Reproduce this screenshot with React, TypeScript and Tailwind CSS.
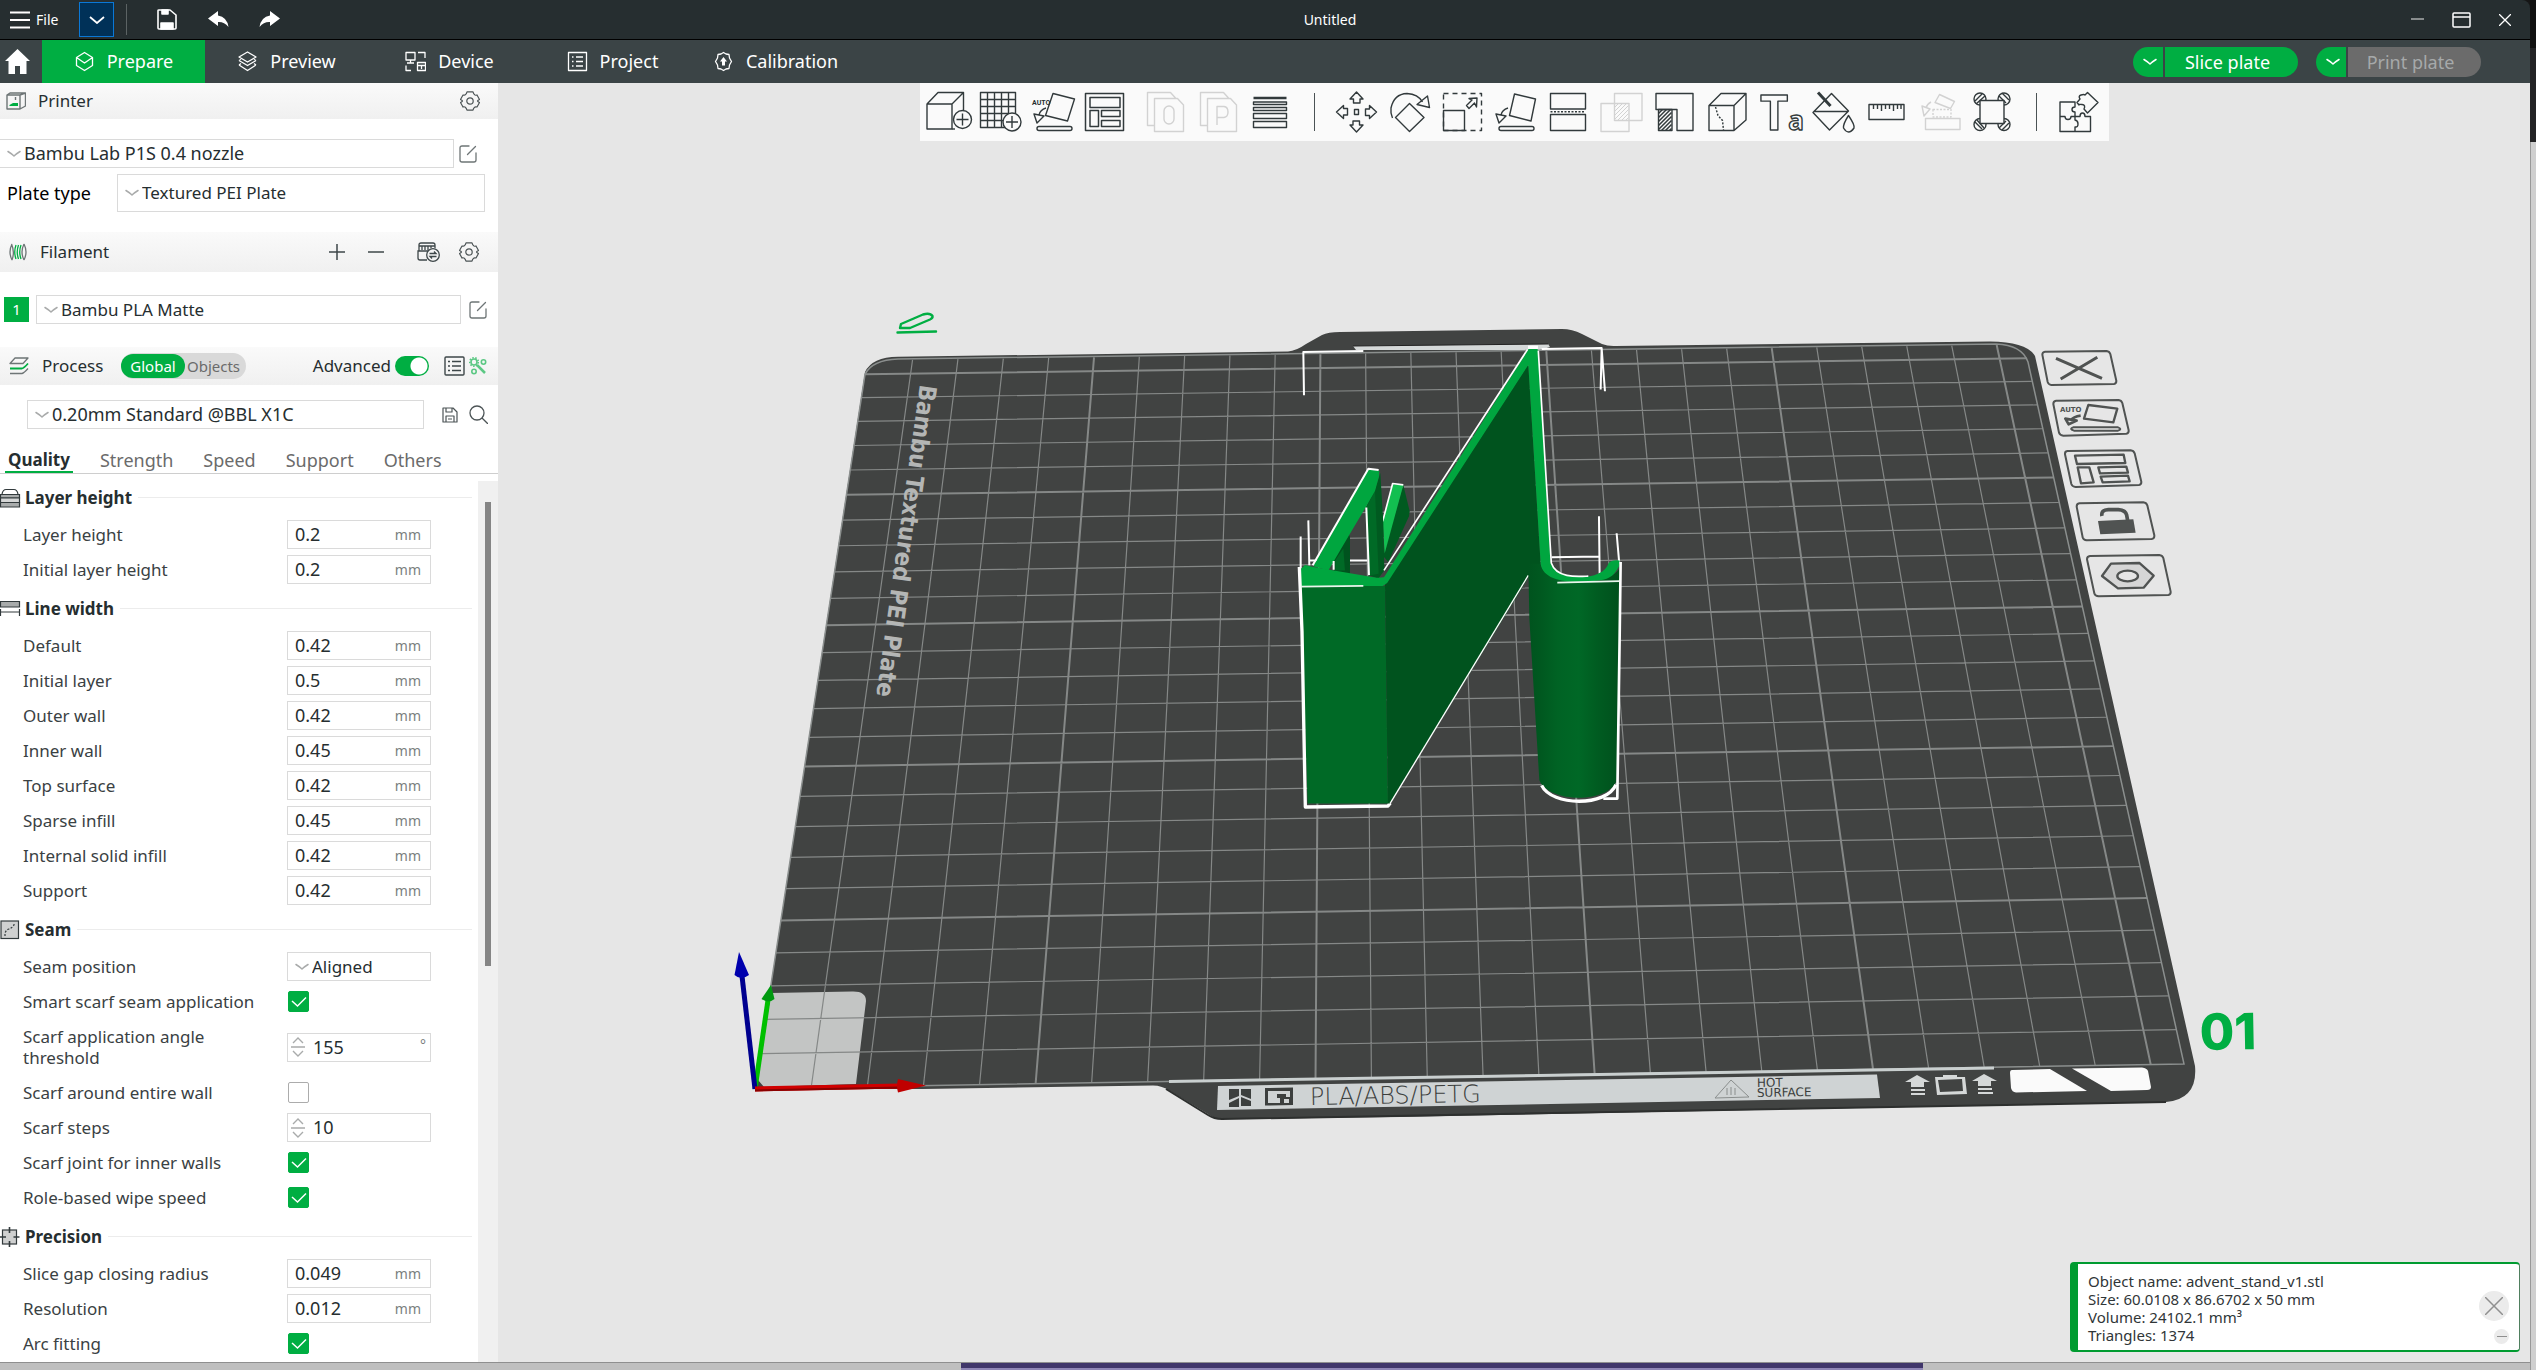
import React, { useState } from "react";

/* ---------- geometry of the build plate ---------- */

const P0 = [755, 1088.5];
const P1 = [2184, 1064];
const P2 = [2026.7, 358.3];
const P3 = [865, 374.3];

function project(mx: number, my: number): [number, number] {
  const u = mx / 256;
  const v = my / 250;
  const dx1 = P1[0] - P2[0];
  const dx2 = P3[0] - P2[0];
  const dx3 = P0[0] - P1[0] + P2[0] - P3[0];
  const dy1 = P1[1] - P2[1];
  const dy2 = P3[1] - P2[1];
  const dy3 = P0[1] - P1[1] + P2[1] - P3[1];
  const det = dx1 * dy2 - dx2 * dy1;
  const g = (dx3 * dy2 - dx2 * dy3) / det;
  const h = (dx1 * dy3 - dx3 * dy1) / det;
  const a = P1[0] - P0[0] + g * P1[0];
  const b = P3[0] - P0[0] + h * P3[0];
  const d = P1[1] - P0[1] + g * P1[1];
  const e = P3[1] - P0[1] + h * P3[1];
  const w = g * u + h * v + 1;
  return [(a * u + b * v + P0[0]) / w, (d * u + e * v + P0[1]) / w];
}

function gridPath(bold: boolean) {
  const parts: string[] = [];
  for (let i = 10; i <= 250; i += 10) {
    if ((i % 50 === 0) !== bold) continue;
    const a = project(i, 0);
    const b = project(i, 256);
    const c = project(0, i);
    const d = project(256, i);
    parts.push(`M${a[0]} ${a[1]}L${b[0]} ${b[1]}M${c[0]} ${c[1]}L${d[0]} ${d[1]}`);
  }
  return parts.join("");
}

/* ---------- 3D scene ---------- */

function Model() {
  return (
    <g transform="translate(1260 300) scale(0.3333 0.338)" strokeLinejoin="round">
      <g fill="none" stroke="#fff" strokeWidth="6">
        <path d="M132 282L130 154L310 151" />
        <path d="M845 145L1025 142L1022 265M1025 142L1035 270" />
        <path d="M122 700V795M145 652L148 785M148 771H322" />
        <path d="M1017 640L1019 810M875 761L1017 759M1070 690L1078 780" />
      </g>
      {/* prong */}
      <path d="M430 547L449 625L447 640L385 775L372 760L372 740Z" fill="#005a20" />
      <path d="M398 545L430 547L374 750L368 655Z" fill="#12bf50" />
      <path d="M368 655L398 543L430 547" fill="none" stroke="#fff" strokeWidth="5" />
      {/* clip frame */}
      <path d="M222 805V765L265 692L270 700V812Z" fill="#00531e" />
      <path d="M226 800V770L250 735L255 800Z" fill="#006a26" />
      <path d="M318 612L345 560L361 512L370 660L373 800L355 824L328 815Z" fill="#005a20" />
      <path d="M320 612L345 565L356 810L328 815Z" fill="#006a26" />
      <path d="M160 788L325 500L358 506L357 522L345 565L318 612L265 700L205 800Z" fill="#00a63f" />
      <path d="M158 785L325 499L356 503M319 614L327 814M221 772V798" fill="none" stroke="#fff" strokeWidth="6" />
      {/* cap of the left block */}
      <path d="M120 798L135 784L160 790L350 822L372 822L400 790L382 838L368 846H120Z" fill="#00a63f" />
      <path d="M122 846H375L384 1490H143Z" fill="#006a26" />
      <path d="M118 790L126 980L136 1500L384 1497L391 1488" fill="none" stroke="#fff" strokeWidth="10" />
      {/* long slanted wall */}
      <path d="M375 843L805 190L842 780L808 816L390 1490L384 1490Z" fill="#00531e" />
      <path d="M805 815L390 1490" stroke="#fff" strokeWidth="4" />
      {/* curled hook */}
      <path
        d="M805 780H842C850 845 1060 850 1080 790L1078 1000L1070 1420C1050 1490 865 1490 838 1420L808 940Z"
        fill="url(#hook)"
      />
      <path
        d="M372 820L805 146L818 139L832 142L835 155L872 778C890 832 1030 835 1046 778Q1056 768 1079 771V785C1070 800 1060 822 1030 828C950 840 850 838 842 780L805 192L381 838Q370 842 345 824Z"
        fill="#00a63f"
      />
      <path d="M372 800L803 146M835 150L874 778C890 826 960 818 985 817" fill="none" stroke="#fff" strokeWidth="5" />
      <path d="M804 140H834" stroke="#fff" strokeWidth="10" />
      <path d="M122 848L310 846M892 836L1078 832" stroke="#e9f5ec" strokeWidth="5" />
      <path d="M1082 775L1079 1000L1072 1475H1030" fill="none" stroke="#fff" strokeWidth="8" />
      <path d="M845 1436C875 1498 1040 1500 1068 1434" fill="none" stroke="#fff" strokeWidth="10" />
    </g>
  );
}

function PlateIcons() {
  return (
    <g transform="translate(1980 320) scale(0.3333)" fill="none" stroke="#505352" strokeWidth="6" strokeLinejoin="round">
      <path d="M195 95L380 93Q388 94 391 102L409 182Q410 191 402 192L214 195Q206 194 203 186L187 104Q187 96 195 95Z" />
      <path d="M228 115L366 175M352 112L242 177" strokeWidth="9" />
      <path d="M228 242L416 240Q424 241 427 249L446 331Q447 340 439 341L250 347Q240 346 237 338L220 252Q220 243 228 242Z" />
      <path d="M325 255L412 266L400 307L312 296Z" strokeWidth="7" />
      <path d="M280 322H414Q428 327 414 332H282Q266 327 280 322Z" />
      <path d="M302 287Q280 290 272 302M256 296L290 302L266 313Z" strokeWidth="8" />
      <text
        x="240"
        y="277"
        fontFamily="'DejaVu Sans', sans-serif"
        fontSize="21"
        fontWeight="700"
        fill="#505352"
        stroke="none"
      >
        AUTO
      </text>
      <path d="M262 393L452 391Q461 392 464 400L484 485Q485 494 477 495L287 501Q277 500 274 492L255 403Q254 394 262 393Z" />
      <path
        d="M285 407L431 404L436 429L291 432ZM293 442H328L341 487L303 490ZM355 442L439 440L444 458L360 460ZM362 470L444 467L449 484L368 487Z"
        strokeWidth="7"
      />
      <path d="M298 550L490 547Q499 548 502 556L523 646Q524 656 515 657L320 661Q311 660 308 652L290 560Q290 551 298 550Z" />
      <path d="M354 603L460 598L467 638L361 643Z" fill="#505352" stroke="none" />
      <path d="M366 588Q362 570 385 569H415Q436 570 440 585L443 602" strokeWidth="11" />
      <path d="M330 708L538 705Q547 706 550 714L572 815Q573 824 565 825L356 829Q346 828 343 820L321 718Q321 709 330 708Z" />
      <path d="M393 731L478 729L521 767L491 803L414 805L366 768Z" fill="#d6d6d6" strokeWidth="7" />
      <ellipse cx="443" cy="768" rx="31" ry="16" fill="#e6e6e6" strokeWidth="7" />
    </g>
  );
}

function Scene() {
  const [a, b] = [project(0, 250), project(256, 0)];
  return (
    <svg
      viewBox="498 83 2032 1279"
      className="absolute inset-0 block h-full w-full"
      role="img"
      aria-label="Build plate with model"
    >
      <defs>
        <linearGradient id="hook" gradientUnits="userSpaceOnUse" x1="805" x2="1080" y1="0" y2="0">
          <stop offset="0" stopColor="#00531e" />
          <stop offset="0.15" stopColor="#005920" />
          <stop offset="0.32" stopColor="#006324" />
          <stop offset="0.55" stopColor="#006826" />
          <stop offset="0.75" stopColor="#005c21" />
          <stop offset="1" stopColor="#00501c" />
        </linearGradient>
        <clipPath id="plate">
          <path d="M755 1089L865 372Q872 358 898 358L1980 343Q2022 343 2028 360L2185 1066Z" />
        </clipPath>
      </defs>
      <path
        d="M755 1089L865 372Q872 357 898 356.700L1288 351.500Q1296 351 1306 344L1322 335Q1328 332 1340 332L1562 329Q1572 329 1582 334L1602 344Q1608 346.500 1616 346L1990 341.500Q2027 342 2035 356L2094 618L2195 1066Q2198 1099 2166 1102L1400 1117L1222 1119Q1214 1119 1208 1114L1170 1091Q1162 1085.500 1153 1085.500L923 1089Z"
        fill="#414342"
      />
      <path d="M1166 1089L1208 1115Q1214 1119 1222 1119L2166 1102" fill="none" stroke="#2d2f2e" strokeWidth="2" />
      <path d="M1353 346L1548 344L1550 347L1540 350L1356 350Z" fill="#d5d9d9" />
      <path d="M1353 346L1548 344" stroke="#222" strokeWidth="1" />
      <path
        d="M771 993L852 991.500Q866 991 866 1001L856 1084L764 1087L758 1080Z"
        fill="#c3c5c4"
      />
      <g clipPath="url(#plate)" fill="none" stroke="#858887">
        <path d={gridPath(false)} strokeWidth="1.200" />
        <path d={gridPath(true)} strokeWidth="2" />
      </g>
      <path
        d={`M755 1088.500L${a[0]} ${a[1]}Q872 360 898 359L1996 344Q2022 345 2028 362L${b[0]} ${b[1]}Z`}
        fill="none"
        stroke="#8b8f8e"
        strokeWidth="1.500"
      />
      <path d="M1169 1081.500L1994 1068" stroke="#c9cfcf" strokeWidth="3" />
      <path d="M1218 1086L1877 1074.500L1880 1098L1217 1110Z" fill="#cfd3d4" />

      {/* plate markings */}
      <g fill="#3c3f3e">
        <path d="M1229 1089H1239V1096L1229 1100ZM1241 1089H1251V1099L1241 1095ZM1229 1103L1239 1098V1107H1229ZM1241 1097L1251 1101V1106H1241Z" />
        <path d="M1265 1088L1293 1087.500V1105L1265 1105.500ZM1268 1091V1103H1280V1098H1277V1094H1286V1097H1290V1091Z" fillRule="evenodd" />
        <rect x="1284" y="1099" width="5" height="4" fill="#cfd3d4" />
        <text x="1310" y="1105" fontFamily="DejaVu Sans" fontSize="24" fontWeight="200" transform="rotate(-1 1310 1105)">
          PLA/ABS/PETG
        </text>
        <g fontFamily="DejaVu Sans" fontSize="12">
          <text x="1757" y="1087" transform="rotate(-1 1757 1087)">HOT</text>
          <text x="1757" y="1097" transform="rotate(-1 1757 1097)">SURFACE</text>
        </g>
      </g>
      <path d="M1731 1080L1715 1098L1749 1097ZM1727 1095V1088M1731 1095V1087M1735 1095V1088" fill="none" stroke="#8a8e8d" />
      <g fill="#d5d8d8">
        <path d="M1917 1075L1930 1082H1924V1087H1911V1082H1905ZM1911 1089H1925V1091H1911ZM1911 1093H1925V1095H1911Z" />
        <path d="M1984 1074L1997 1081H1991V1086H1978V1081H1972ZM1978 1088H1992V1090H1978ZM1978 1092H1993V1094H1978Z" />
        <path d="M1935 1077H1943V1075H1957V1077H1965L1967 1094L1937 1095ZM1938 1080L1940 1092L1963 1091L1962 1079Z" fillRule="evenodd" />
      </g>
      <path d="M2012 1070L2050 1069L2087 1091L2016 1092.500Q2012 1092 2011 1088L2010 1073Q2010 1070 2012 1070Z" fill="#fafafa" />
      <path d="M2072 1068.500L2142 1067.500Q2147 1068 2148 1071L2151 1087Q2151 1090 2147 1090L2111 1091Z" fill="#fafafa" />
      <text
        x="920"
        y="384"
        fontFamily="'Liberation Sans Narrow', 'DejaVu Sans Condensed', sans-serif"
        fontSize="24"
        fontWeight="700"
        fill="#b4b6b5"
        transform="rotate(98 920 384)"
      >
        Bambu Textured PEI Plate
      </text>
      <text x="2200" y="1050" fontFamily="Inter, sans-serif" fontSize="50" fontWeight="800" fill="#00ae42" transform="rotate(-1 2200 1050)">
        01
      </text>
      <g fill="none" stroke="#00ae42" strokeWidth="2.400" strokeLinejoin="round" strokeLinecap="round">
        <path d="M900 328L901 324L923 314.500Q930 312.500 932.500 316Q933 318 930 319.500L910 328Z" />
        <path d="M897.500 332.500L936 331.500" />
      </g>

      <Model />
      <PlateIcons />

      {/* axes */}
      <path d="M755 1089L768 1000" stroke="#00c000" strokeWidth="5" />
      <path d="M771 985L774.500 999Q768 1004 761.500 999Z" fill="#009a10" />
      <path d="M755 1089L742 976" stroke="#00008f" strokeWidth="5" />
      <path d="M739 952L749 975Q741 981 734.500 975Z" fill="#0000ae" />
      <path d="M755 1089L900 1086" stroke="#d00000" strokeWidth="5" />
      <path d="M755 1090.500L900 1087.500" stroke="#8a0000" strokeWidth="2" />
      <path d="M926 1085.500L898 1079Q896 1086 898 1092.500Z" fill="#c00000" />
    </svg>
  );
}

/* ---------- toolbar ---------- */

function ToolArrow() {
  return <path d="M14 18Q8 20 7 25M2 24L12 26L5 33Z" />;
}

const hatch = (x: number, y: number, w: number, h: number) => {
  const out: string[] = [];
  for (let i = 4; i < w + h; i += 4) {
    const x1 = Math.min(i, w);
    const y1 = i - x1;
    const y2 = Math.min(i, h);
    const x2 = i - y2;
    out.push(`M${x + x1} ${y + y1}L${x + x2} ${y + y2}`);
  }
  return out.join("");
};

const move = "M21.500 2L28 9H25V13H18.500V9H15Z";

type Tool = { label: string; dim?: boolean; art: React.ReactNode };

const addTools: Tool[] = [
  {
    label: "Add",
    art: (
      <>
        <path d="M1 14H26V39H1ZM1 14L12 2.500H37.500V20M26 14L37.500 2.500" />
        <path d="M26 39H29" />
        <circle cx="36.500" cy="29.500" r="9" />
        <path d="M30.500 29.500H42.500M36.500 23.500V35.500" />
      </>
    ),
  },
  {
    label: "Add plate",
    art: (
      <>
        <path d="M26 37.500H1.500V2.500H36.500V23M1.500 9.500H36.500M1.500 16.500H36.500M1.500 23.500H30M1.500 30.500H24M8.500 2.500V37.500M15.500 2.500V37.500M22.500 2.500V37.500M29.500 2.500V24" />
        <circle cx="33" cy="32" r="9" />
        <path d="M27 32H39M33 26V38" />
      </>
    ),
  },
  {
    label: "Auto orient",
    art: (
      <>
        <path d="M21 3.500L42.500 9L35.500 31L13.500 25.500Z" />
        <ToolArrow />
        <rect x="5" y="36.500" width="35" height="4" rx="2" />
        <text x="0" y="15" fontSize="7" fontWeight="700" fontFamily="Roboto, sans-serif" fill="#262e30" stroke="none">
          AUTO
        </text>
      </>
    ),
  },
  {
    label: "Arrange",
    art: (
      <path
        d="M.5 3.500H38.500V40.500H.5ZM5 7.500H35V17.500H5ZM5 20.500H13.500V36.500H5ZM16.500 20.500H35V26.500H16.500ZM16.500 30.500H35V36.500H16.500Z"
        strokeWidth="1.500"
      />
    ),
  },
];

const docShape = (
  <path d="M11.500 35.500H4.500V2.500H27.500L32.500 8M11.500 8.500H34.500L40.500 15V41.500H11.500Z" />
);

const splitTools: Tool[] = [
  {
    label: "Split to objects",
    dim: true,
    art: (
      <>
        {docShape}
        <rect x="21" y="16" width="10" height="18" rx="5" />
      </>
    ),
  },
  {
    label: "Split to parts",
    dim: true,
    art: (
      <>
        {docShape}
        <path d="M21 35V16.500H28Q32 17 32 22T28 27.500H21" />
      </>
    ),
  },
  {
    label: "Variable layer height",
    art: (
      <>
        <path d="M4.500 8H37.500" strokeWidth="2.500" />
        <path d="M4.500 12H37.500V14.500H4.500ZM4.500 17.500H37.500V20.500H4.500ZM4.500 23.500H37.500V28.500H4.500ZM4.500 31.500H37.500V37.500H4.500Z" />
      </>
    ),
  },
];

const gizmoTools: Tool[] = [
  {
    label: "Move",
    art: (
      <>
        <path d={move} />
        <path d={move} transform="rotate(90 21.500 22)" />
        <path d={move} transform="rotate(180 21.500 22)" />
        <path d={move} transform="rotate(270 21.500 22)" />
        <rect x="19.500" y="19.500" width="4" height="5" />
      </>
    ),
  },
  {
    label: "Rotate",
    art: (
      <>
        <path d="M21.500 13.500L36 27.500L21.500 41.500L7.500 27.500Z" />
        <path d="M4.500 28A18 18 0 0 1 3 18Q6 4 19 3.500Q30 4 34.500 12M29 14.500L39.500 6L41.500 17.500Z" />
      </>
    ),
  },
  {
    label: "Scale",
    art: (
      <>
        <path d="M2.500 3.500H40.500V40.500H2.500Z" strokeDasharray="5 4" />
        <path d="M2.500 20.500H23.500V40.500H2.500Z" />
        <path d="M25.500 15.500L31 10L28 8.500L36 8L35.500 17L33.500 13L28 18.500Z" />
      </>
    ),
  },
  {
    label: "Lay on face",
    art: (
      <>
        <path d="M20.500 4L41.500 9L37 31L15.500 25.500Z" />
        <ToolArrow />
        <rect x="5" y="36.500" width="35" height="4" rx="2" />
      </>
    ),
  },
  {
    label: "Cut",
    art: (
      <>
        <path d="M3.500 3.500H38.500V19H3.500ZM3.500 24.500H38.500V40.500H3.500Z" />
        <path d="M3.500 21.700H38.500" strokeDasharray="2 1.500" />
      </>
    ),
  },
  {
    label: "Mesh boolean",
    dim: true,
    art: (
      <>
        <path d="M14.500 3.500H42V30.500H14.500ZM1 13.500H29V41.500H1Z" />
        <path d={hatch(14.5, 13.5, 14, 17)} strokeWidth="1" />
      </>
    ),
  },
  {
    label: "Support painting",
    art: (
      <>
        <path d="M3 3.500H40V40.500H24V19.500H3Z" />
        <path d="M5.500 19.500H19V40.500H5.500Z" />
        <path d={hatch(5.5, 19.5, 13, 21)} strokeWidth="1.500" />
      </>
    ),
  },
  {
    label: "Seam painting",
    art: (
      <>
        <path d="M3 15.500H28V40.500H3ZM3 15.500L15 3.500H40V30L28 40.500M28 15.500L40 3.500" />
        <path d="M9.500 17L12 25.500L16.500 30.500L17.500 40" strokeDasharray="2 1.500" />
      </>
    ),
  },
  {
    label: "Text shape",
    art: (
      <text x="1" y="40" fontSize="49" fontFamily="'Noto Sans', sans-serif" fontWeight="700">
        T<tspan fontSize="26">a</tspan>
      </text>
    ),
  },
  {
    label: "Color painting",
    art: (
      <>
        <path d="M19.500 3.500L36.500 21L17.500 40L1 22.500ZM1.500 21.500H36" />
        <path d="M6 2.500L18.500 16" strokeWidth="3" />
        <path d="M36.500 25.500Q43 35 42 38Q36.500 46 31.500 38Q31 34 36.500 25.500Z" />
      </>
    ),
  },
  {
    label: "Measure",
    art: <path d="M4 14.500H39V29.500H4ZM8.500 14.500V19M12.500 14.500V19M16.500 14.500V21M20.500 14.500V19M24.500 14.500V19M28.500 14.500V21M32.500 14.500V19M36 14.500V19" />,
  },
  {
    label: "Assemble",
    dim: true,
    art: (
      <>
        <path d="M7.500 28.500H42V39.500H7.500ZM21.500 4.500L36.500 11.500L32.500 18.500L17 12.500Z" />
        <path d="M15 19.500H33V27H15Z" strokeDasharray="2 1.500" />
        <path d="M13 12Q9 14 8 18M4 16L12 19L6 26Z" />
      </>
    ),
  },
  {
    label: "Brim ears",
    art: (
      <>
        <circle cx="9" cy="9" r="6" />
        <circle cx="33" cy="9" r="6" />
        <circle cx="9" cy="34.500" r="6" />
        <circle cx="33" cy="34.500" r="6" />
        <path d="M4 11L11 4M5 14L14 6M28 6L35 13M31 3L38 10M4 32L11 39M6 30L13 38M28 38L35 31M31 40L38 33" />
        <path d="M9 10.500H33V33.500H9Z" fill="#fafafa" />
      </>
    ),
  },
];

const assemblyTool: Tool = {
  label: "Assembly view",
  art: (
    <>
      <path d="M18 12H3V41.500H33.500V26.500H28Q28 23 25.500 23T23 26.500H18V22Q15 22 15 19.500T18 17Z" />
      <path d="M3 26.500H8Q8 29.500 11 29.500T14 26.500H18V30Q21 30.500 21 34T18 37V41.500" />
      <path d="M30.500 2.500L41 12.500L30.500 23L27 19Q29 15 25 14.500T22 15L20 12.500L23 9Q21 6 24 5T28 5Z" />
    </>
  ),
};

function ToolButton({ tool }: { tool: Tool }) {
  return (
    <button type="button" aria-label={tool.label} className="h-11 w-[45px] shrink-0">
      <svg
        viewBox="0 0 45 44"
        className={tool.dim ? "h-11 w-[45px] overflow-visible stroke-[#d2d2d2]" : "h-11 w-[45px] overflow-visible stroke-[#323a3c]"}
        fill="none"
        strokeWidth="1.400"
        strokeLinejoin="round"
      >
        {tool.art}
      </svg>
    </button>
  );
}

function Toolbar() {
  return (
    <div className="relative z-10 mx-auto flex h-[58px] w-fit items-center gap-2 bg-[#fafafa] pl-1.5 pr-[7px]">
      {addTools.map((t) => (
        <ToolButton key={t.label} tool={t} />
      ))}
      <div className="flex gap-2 pl-[5px]">
        {splitTools.map((t) => (
          <ToolButton key={t.label} tool={t} />
        ))}
      </div>
      <span className="mx-3 h-[38px] w-px bg-[#4a5254]" />
      {gizmoTools.map((t) => (
        <ToolButton key={t.label} tool={t} />
      ))}
      <span className="mx-3 h-[38px] w-px bg-[#4a5254]" />
      <ToolButton tool={assemblyTool} />
    </div>
  );
}

/* ---------- top bars ---------- */

function Chevron({ className }: { className: string }) {
  return (
    <svg viewBox="0 0 14 8" className={className} fill="none" strokeWidth="1.500" strokeLinecap="round" strokeLinejoin="round">
      <path d="M1 1.500Q5 4 7 6Q9 4 13 1.500" />
    </svg>
  );
}

function TitleBar() {
  return (
    <header className="grid h-10 grid-cols-3 items-center rounded-tr-lg border-b border-black bg-[#262e30] text-white">
      <div className="flex items-center">
        <button type="button" className="flex items-center gap-1.5 pl-2.5 text-[14px]">
          <svg viewBox="0 0 20 18" className="h-[18px] w-5" stroke="#fff" strokeWidth="2">
            <path d="M0 1.500H20M0 9H20M0 16.500H20" />
          </svg>
          File
        </button>
        <button
          type="button"
          aria-label="Menu"
          className="ml-[21px] flex h-[35px] w-[35px] items-center justify-center border border-[#0a78d7] bg-[#003158]"
        >
          <svg viewBox="0 0 16 8" className="h-2 w-4" fill="none" stroke="#fff" strokeWidth="1.800">
            <path d="M1 1L8 7L15 1" />
          </svg>
        </button>
        <span className="ml-3 h-[31px] w-px bg-[#5c6364]" />
        <button type="button" aria-label="Save" className="ml-[30px]">
          <svg viewBox="0 0 20 21" className="h-[21px] w-5" fill="none" stroke="#fff" strokeWidth="1.600" strokeLinejoin="round">
            <path d="M1 1.500Q1 1 2 1H13L19 6V19Q19 20 18 20H2Q1 20 1 19Z" />
            <path d="M5 1H11V5H5ZM4 14H16V20H4Z" fill="#fff" />
          </svg>
        </button>
        <button type="button" aria-label="Undo" className="ml-[31px]">
          <svg viewBox="0 0 21 17" className="h-[17px] w-[21px]" fill="#fff">
            <path d="M0 7.500L10 0V4.500Q19 6 20.500 16Q16 10.500 10 11V15Z" />
          </svg>
        </button>
        <button type="button" aria-label="Redo" className="ml-[30px]">
          <svg viewBox="0 0 21 17" className="h-[17px] w-[21px]" fill="#fff">
            <path d="M21 7.500L11 0V4.500Q2 6 .5 16Q5 10.500 11 11V15Z" />
          </svg>
        </button>
      </div>
      <h1 className="pl-[130px] text-center text-[14px]">Untitled</h1>
      <div className="flex items-center justify-end gap-7 pr-[19px]">
        <button type="button" aria-label="Minimize">
          <svg viewBox="0 0 13 12" className="h-3 w-[13px]" stroke="#aaadad" strokeWidth="1.500">
            <path d="M0 5H13" />
          </svg>
        </button>
        <button type="button" aria-label="Maximize">
          <svg viewBox="0 0 19 16" className="h-4 w-[19px]" fill="none" stroke="#fff" strokeWidth="1.500">
            <rect x="1" y="1" width="17" height="14" rx="1" />
            <path d="M1 5H18" />
          </svg>
        </button>
        <button type="button" aria-label="Close">
          <svg viewBox="0 0 12 12" className="h-3 w-3" stroke="#fff" strokeWidth="1.300">
            <path d="M0 0L12 12M12 0L0 12" />
          </svg>
        </button>
      </div>
    </header>
  );
}

const navItems = [
  {
    label: "Prepare",
    icon: (
      <>
        <path d="M10.500 1.500L18.500 6.500V14.500L10.500 19.500L2.500 14.500V6.500ZM2.500 6.500L10.500 12L18.500 6.500" />
      </>
    ),
  },
  {
    label: "Preview",
    icon: (
      <path d="M10.500 1L19 6L10.500 11L2 6ZM2 9.500L10.500 14.500L19 9.500M2 9.500L4 8.500M19 9.500L17 8.500M2 14L10.500 19.500L19 14M2 14L4 12.500M19 14L17 12.500" />
    ),
  },
  {
    label: "Device",
    icon: (
      <path d="M1 1.500H10V9H1ZM5.500 9V12M2 12H9M13 1.500H20V7M1 14.500V19.500H6M12.500 11.500H20.500V19.500H12.500ZM12.500 14.500H20.500M16.500 15V18" />
    ),
  },
  {
    label: "Project",
    icon: <path d="M1.500 1.500H19.500V19.500H1.500ZM5 6H6.500M9 6H16M5 10.500H6.500M9 10.500H16M5 15H6.500M9 15H16" />,
  },
  {
    label: "Calibration",
    icon: (
      <>
        <path d="M8 3L10.500 1.500L13 3L16 3.500L16.500 7L18.500 10.500L16.500 14L16 17.500L13 18L10.500 19.500L8 18L5 17.500L4.500 14L2.500 10.500L4.500 7L5 3.500Z" />
        <path d="M10.500 6L14 10.500H12V14.500H9V10.500H7Z" fill="#fff" stroke="none" />
      </>
    ),
  },
];

function SplitButton({ label, enabled }: { label: string; enabled: boolean }) {
  return (
    <div className="flex h-[30px] gap-0.5">
      <button
        type="button"
        aria-label={label + " options"}
        className="flex w-[30px] items-center justify-center rounded-l-full bg-[#00ae42] pl-1"
      >
        <Chevron className="h-2 w-3.5 stroke-white" />
      </button>
      <button
        type="button"
        className={
          enabled
            ? "w-[133px] rounded-r-full bg-[#00ae42] pr-2 text-[18px] leading-7 text-white"
            : "w-[133px] rounded-r-full bg-[#6b6b6b] pr-2 text-[18px] leading-7 text-[#a6a9aa]"
        }
      >
        {label}
      </button>
    </div>
  );
}

function NavBar() {
  const [active, setActive] = useState("Prepare");
  return (
    <nav className="flex h-[43px] items-stretch bg-[#3b4446] text-white">
      <button type="button" aria-label="Home" className="flex w-[42px] items-center pl-[5px]">
        <svg viewBox="0 0 25 25" className="h-[25px] w-[25px]" fill="#fff">
          <path d="M12.500 0L25 12H21.500V25H15V17H10V25H3.500V12H0Z" />
        </svg>
      </button>
      {navItems.map((item) => (
        <button
          key={item.label}
          type="button"
          onClick={() => setActive(item.label)}
          className={
            active === item.label
              ? "flex w-[163px] items-center justify-center gap-3 bg-[#00ae42] text-[18px]"
              : "flex w-[163px] items-center justify-center gap-3 text-[18px]"
          }
        >
          <svg viewBox="0 0 21 21" className="h-[21px] w-[21px]" fill="none" stroke="#fff" strokeWidth="1.300" strokeLinejoin="round">
            {item.icon}
          </svg>
          {item.label}
        </button>
      ))}
      <div className="ml-auto flex items-center gap-[18px] pr-[49px]">
        <SplitButton label="Slice plate" enabled />
        <SplitButton label="Print plate" enabled={false} />
      </div>
    </nav>
  );
}

/* ---------- sidebar ---------- */

function GearIcon() {
  return (
    <svg viewBox="0 0 20 20" className="h-5 w-5" fill="none" stroke="#4c5456" strokeWidth="1.200" strokeLinejoin="round">
      <path d="M7 .8H13Q13.500 3 15 4Q16.500 4.500 17 4L19.500 8.500Q17.500 9.500 17.500 10T19.500 11.500L17 16Q15 15.500 14.500 16.500Q13.500 17 13 19.200H7Q6.500 17 5 16Q3.500 15.500 3 16L.5 11.500Q2.500 10.500 2.500 10T.5 8.500L3 4Q5 4.500 5.500 3.500Q6.500 3 7 .8Z" />
      <circle cx="10" cy="10" r="3.200" />
    </svg>
  );
}

function EditIcon() {
  return (
    <svg viewBox="0 0 18 18" className="h-[18px] w-[18px]" fill="none" stroke="#6e7576" strokeWidth="1.300" strokeLinecap="round">
      <path d="M10 1H3Q1 1 1 3V15Q1 17 3 17H15Q17 17 17 15V8M8.500 9.500L16.500 1.500" />
    </svg>
  );
}

function Combo({ id, label, value, className }: { id: string; label: string; value: string; className: string }) {
  return (
    <div className={"relative flex items-center border border-[#dadada] bg-white " + className}>
      <Chevron className="pointer-events-none absolute left-[7px] h-2 w-3.5 stroke-[#a9abab]" />
      <select id={id} aria-label={label} defaultValue={value} className="h-full w-full appearance-none pl-6 text-[#262e30] outline-none">
        <option>{value}</option>
      </select>
    </div>
  );
}

const barClass = "flex shrink-0 items-center bg-gradient-to-b from-[#fafafa] to-[#f0f0f0]";

function PrinterPanel() {
  return (
    <section>
      <div className={barClass + " h-9 pl-1.5 pr-[18px]"}>
        <svg viewBox="0 0 20 18" className="h-[18px] w-5" fill="none" stroke="#6e7576" strokeWidth="1.400" strokeLinejoin="round">
          <path d="M1 3H14V17H1ZM1 3L4 1H19.500V14L14 17M14 3L19.500 1M9.500 5V8" />
          <path d="M3.500 13L7 11H12V14H3.500Z" fill="#00ae42" stroke="none" />
        </svg>
        <h2 className="ml-3">Printer</h2>
        <button type="button" aria-label="Printer settings" className="ml-auto">
          <GearIcon />
        </button>
      </div>
      <div className="mt-5 flex items-center gap-[5px] pr-[21px]">
        <Combo id="printer" label="Printer preset" value="Bambu Lab P1S 0.4 nozzle" className="h-[29px] flex-1 border-l-0 text-[18px]" />
        <button type="button" aria-label="Edit printer">
          <EditIcon />
        </button>
      </div>
      <div className="mt-1.5 flex items-center pl-[7px] pr-[13px]">
        <label htmlFor="plate-type" className="w-[110px] text-[18px] text-black">
          Plate type
        </label>
        <Combo id="plate-type" label="Plate type" value="Textured PEI Plate" className="h-[38px] flex-1" />
      </div>
    </section>
  );
}

function FilamentPanel() {
  return (
    <section className="mt-5">
      <div className={barClass + " h-10 pl-[9px] pr-[19px]"}>
        <svg viewBox="0 0 18 18" className="h-[18px] w-[18px]" fill="none" strokeWidth="1.300">
          <path d="M3 1Q-1 9 3 17M2.500 1Q6 9 3 17M15 1Q11 9 15 17M15 1Q19 9 15 17" stroke="#6e7576" />
          <path d="M7 2Q4.500 9 7 16M9.500 2Q7 9 9.500 16M12 2Q9.500 9 12 16" stroke="#00ae42" />
        </svg>
        <h2 className="ml-[13px]">Filament</h2>
        <div className="ml-auto flex items-center">
          <button type="button" aria-label="Add filament">
            <svg viewBox="0 0 16 16" className="h-4 w-4" stroke="#3e4749" strokeWidth="1.500">
              <path d="M0 8H16M8 0V16" />
            </svg>
          </button>
          <button type="button" aria-label="Remove filament" className="ml-[23px]">
            <svg viewBox="0 0 16 16" className="h-4 w-4" stroke="#3e4749" strokeWidth="1.500">
              <path d="M0 8H16" />
            </svg>
          </button>
          <button type="button" aria-label="Sync filaments" className="ml-[33px]">
            <svg viewBox="0 0 23 20" className="h-5 w-[23px]" fill="none" stroke="#3e4749" strokeWidth="1.300">
              <path d="M2 9V3Q2 1 4 1H16Q18 1 18 3V6M5 4V8M8 4V8M11 4V8M14 4V6M2 4H18M11 9H1V16Q1 18 3 18H10" />
              <circle cx="16" cy="13" r="6.300" />
              <path d="M12.500 11.500H19L17 9.500M19.500 14.500H13L15 16.500" />
            </svg>
          </button>
          <button type="button" aria-label="Filament settings" className="ml-[19px]">
            <GearIcon />
          </button>
        </div>
      </div>
      <div className="mt-[23px] flex items-center pl-1 pr-[11px]">
        <button type="button" className="h-[25px] w-[25px] bg-[#00ae42] text-[15px] leading-[25px] text-white">
          1
        </button>
        <Combo id="filament" label="Filament" value="Bambu PLA Matte" className="ml-[7px] h-[29px] flex-1" />
        <button type="button" aria-label="Edit filament" className="ml-2">
          <EditIcon />
        </button>
      </div>
    </section>
  );
}

const tabs = ["Quality", "Strength", "Speed", "Support", "Others"];

function ProcessPanel() {
  const [tab, setTab] = useState("Quality");
  return (
    <section className="mt-[23px]">
      <div className={barClass + " h-[38px] pl-[9px] pr-2.5"}>
        <svg viewBox="0 0 20 18" className="h-[18px] w-5" fill="none" stroke="#6e7576" strokeWidth="1.300" strokeLinejoin="round">
          <path d="M1 6.500L6 1H19L14 6.500ZM1 16.500H13Q15 16 19 11.500" />
          <path d="M1 11.500H13Q15 11 19 6.500" stroke="#00ae42" strokeWidth="1.800" />
        </svg>
        <h2 className="ml-[13px] w-[79px]">Process</h2>
        <div className="flex h-[26px] w-[125px] items-center rounded-full bg-[#d9d9d9] text-[15px]">
          <button type="button" className="h-6 w-16 rounded-full bg-[#00ae42] text-white">
            Global
          </button>
          <button type="button" className="flex-1 pr-1 text-[#6b6b6b]">
            Objects
          </button>
        </div>
        <label htmlFor="advanced" className="ml-auto mr-1">
          Advanced
        </label>
        <input
          id="advanced"
          type="checkbox"
          role="switch"
          defaultChecked
          className="h-5 w-[34px] appearance-none rounded-full bg-[#c9c9c9] bg-[radial-gradient(circle_at_24px_10px,#fff_8px,transparent_9px)] checked:bg-[#00ae42]"
        />
        <button type="button" aria-label="Compare presets" className="ml-[15px]">
          <svg viewBox="0 0 21 20" className="h-5 w-[21px]" fill="none" stroke="#3e4749" strokeWidth="1.400">
            <rect x="1" y="1" width="19" height="18" rx="1" />
            <path d="M4 5.500H6M8 5.500H17M4 10H6M8 10H17M4 14.500H6M8 14.500H17" />
          </svg>
        </button>
        <button type="button" aria-label="Parameter table" className="ml-1">
          <svg viewBox="0 0 19 18" className="h-[18px] w-[19px]" fill="none" stroke="#5cc884" strokeWidth="1.600">
            <circle cx="5" cy="5" r="3" />
            <circle cx="5" cy="5" r="4.300" strokeDasharray="1.500 1.500" />
            <circle cx="14.500" cy="5" r="2.200" />
            <circle cx="5" cy="14.500" r="2.200" />
            <path d="M8 8L16 16" strokeWidth="2.500" />
          </svg>
        </button>
      </div>
      <div className="mt-[15px] flex items-center pl-[27px] pr-2.5">
        <Combo id="process" label="Process preset" value="0.20mm Standard @BBL X1C" className="h-[29px] flex-1 text-[18px]" />
        <button type="button" aria-label="Save preset" className="ml-[18px]">
          <svg viewBox="0 0 16 16" className="h-4 w-4" fill="none" stroke="#4c5456" strokeWidth="1.200" strokeLinejoin="round">
            <path d="M1 1H11L15 5V15H1ZM4 1V5H10V1M4 15V9H12V15M6 12H10" />
          </svg>
        </button>
        <button type="button" aria-label="Search" className="ml-[11px]">
          <svg viewBox="0 0 19 19" className="h-[19px] w-[19px]" fill="none" stroke="#4c5456" strokeWidth="1.300">
            <circle cx="8" cy="8" r="7" />
            <path d="M13 13L19 19" />
          </svg>
        </button>
      </div>
      <div role="tablist" className="mt-[15px] flex h-[30px] gap-6 border-b border-[#cecece] pl-[5px] text-[#6b6b6b]">
        {tabs.map((t) => (
          <button
            key={t}
            type="button"
            role="tab"
            aria-selected={tab === t}
            onClick={() => setTab(t)}
            className={
              tab === t
                ? "border-b-2 border-[#00ae42] px-[3px] pt-1 text-[17px] leading-6 font-bold text-[#262e30]"
                : "border-b-2 border-transparent px-[3px] pt-1 text-[18px] leading-6"
            }
          >
            {t}
          </button>
        ))}
      </div>
    </section>
  );
}

function slug(s: string) {
  return s.toLowerCase().replace(/[^a-z0-9]+/g, "-");
}

function Row({ label, tall, children }: { label: string; tall?: boolean; children: React.ReactNode }) {
  return (
    <div className={tall ? "flex h-14 items-center pl-[23px]" : "flex h-[35px] items-center pl-[23px]"}>
      <label htmlFor={slug(label)} className="w-[264px] pr-5 leading-[21px] text-[#3a4143]">
        {label}
      </label>
      {children}
    </div>
  );
}

const boxClass = "flex h-[29px] w-36 items-center border border-[#dadada] bg-white";

function ValueRow({ label, value }: { label: string; value: string }) {
  return (
    <Row label={label}>
      <div className={boxClass + " pl-[7px] pr-[9px]"}>
        <input id={slug(label)} defaultValue={value} className="w-full min-w-0 text-[18px] outline-none" />
        <span className="text-[14px] text-[#7b7f80]">mm</span>
      </div>
    </Row>
  );
}

function SpinRow({ label, value, unit, tall }: { label: string; value: string; unit?: string; tall?: boolean }) {
  return (
    <Row label={label} tall={tall}>
      <div className={boxClass + " pl-[3px] pr-1"}>
        <svg viewBox="0 0 14 22" className="h-[22px] w-3.5 shrink-0" fill="none" stroke="#a9abab" strokeWidth="1.400">
          <path d="M2 7L7 2L12 7M0 11H14M2 15L7 20L12 15" />
        </svg>
        <input id={slug(label)} defaultValue={value} className="w-full min-w-0 pl-2 text-[18px] outline-none" />
        {unit && <span className="self-start text-[14px] text-[#7b7f80]">{unit}</span>}
      </div>
    </Row>
  );
}

function CheckRow({ label, checked }: { label: string; checked?: boolean }) {
  return (
    <Row label={label}>
      <span className="relative ml-px flex h-[21px] w-[21px]">
        <input
          id={slug(label)}
          type="checkbox"
          defaultChecked={checked}
          className="peer h-[21px] w-[21px] appearance-none rounded-[2px] border border-[#acacac] bg-white checked:border-[#00ae42] checked:bg-[#00ae42]"
        />
        <svg
          viewBox="0 0 21 21"
          className="pointer-events-none absolute inset-0 hidden peer-checked:block"
          fill="none"
          stroke="#fff"
          strokeWidth="1.500"
        >
          <path d="M4 10L9.500 15L18 6.500" />
        </svg>
      </span>
    </Row>
  );
}

function Section({ title, icon, children }: { title: string; icon: React.ReactNode; children: React.ReactNode }) {
  return (
    <section>
      <div className="flex h-[41px] items-center pt-0.5">
        <svg viewBox="0 0 20 20" className="h-5 w-5 shrink-0 overflow-visible" fill="none" stroke="#323a3c" strokeWidth="1.200">
          {icon}
        </svg>
        <h3 className="ml-[5px] mr-1.5 font-bold">{title}</h3>
        <span className="mr-1.5 h-px flex-1 bg-[#ececec]" />
      </div>
      {children}
    </section>
  );
}

function Settings() {
  return (
    <div className="flex min-h-0 flex-1">
      <div className="mt-0.5 min-h-0 min-w-0 flex-1 overflow-hidden">
        <Section
          title="Layer height"
          icon={
            <>
              <path d="M2 6Q3 1.500 6 1.500H14Q17 1.500 18 6" />
              <path d="M.5 6.500H19.500V10H.5ZM.5 14.500H19.500V19H.5Z" fill="#a8abab" />
              <path d="M.5 10H19.500V14.500H.5Z" fill="#d5d6d6" />
            </>
          }
        >
          <ValueRow label="Layer height" value="0.2" />
          <ValueRow label="Initial layer height" value="0.2" />
        </Section>
        <Section
          title="Line width"
          icon={
            <>
              <path d="M.5 2.500H19.500V8H.5Z" fill="#a8abab" />
              <path d="M.5 10V17M19.500 10V17M.5 13H19.500" />
            </>
          }
        >
          <ValueRow label="Default" value="0.42" />
          <ValueRow label="Initial layer" value="0.5" />
          <ValueRow label="Outer wall" value="0.42" />
          <ValueRow label="Inner wall" value="0.45" />
          <ValueRow label="Top surface" value="0.42" />
          <ValueRow label="Sparse infill" value="0.45" />
          <ValueRow label="Internal solid infill" value="0.42" />
          <ValueRow label="Support" value="0.42" />
        </Section>
        <Section
          title="Seam"
          icon={
            <>
              <rect x="1" y="1" width="17.500" height="17.500" fill="#cfd0d0" />
              <path d="M5 16V13Q6 10 9 9T14 5V3" strokeDasharray="2 1.500" />
            </>
          }
        >
          <Row label="Seam position">
            <Combo id="seam-position" label="Seam position" value="Aligned" className="h-[29px] w-36" />
          </Row>
          <CheckRow label="Smart scarf seam application" checked />
          <SpinRow label="Scarf application angle threshold" value="155" unit="°" tall />
          <CheckRow label="Scarf around entire wall" />
          <SpinRow label="Scarf steps" value="10" />
          <CheckRow label="Scarf joint for inner walls" checked />
          <CheckRow label="Role-based wipe speed" checked />
        </Section>
        <Section
          title="Precision"
          icon={
            <>
              <rect x="2.500" y="3" width="14" height="14" fill="#cfd0d0" />
              <path d="M9.500 0V6M9.500 14V20M0 10H6M13.500 10H19.500" strokeWidth="1.600" />
            </>
          }
        >
          <ValueRow label="Slice gap closing radius" value="0.049" />
          <ValueRow label="Resolution" value="0.012" />
          <CheckRow label="Arc fitting" checked />
        </Section>
      </div>
      <div className="mt-[7px] flex w-5 flex-col items-center bg-[#f0f0f0] pt-[21px]">
        <div className="h-[54%] w-1.5 bg-[#858585]" />
      </div>
    </div>
  );
}

/* ---------- notification ---------- */

function ObjectInfo() {
  return (
    <aside className="absolute bottom-[10px] right-[10px] z-10 flex h-[90px] w-[450px] items-center rounded-[4px] border-2 border-l-8 border-r border-[#009b30] border-r-[#4f7f5e] bg-white pl-2.5 pr-2.5">
      <div className="pt-px text-[15px] leading-[18px] text-[#303638]">
        <p>Object name: advent_stand_v1.stl</p>
        <p>Size: 60.0108 x 86.6702 x 50 mm</p>
        <p>Volume: 24102.1 mm³</p>
        <p>Triangles: 1374</p>
      </div>
      <div className="ml-auto flex flex-col items-end gap-2 pt-5">
        <button type="button" aria-label="Close" className="flex h-[30px] w-[30px] items-center justify-center rounded-full bg-[#ebebeb]">
          <svg viewBox="0 0 18 18" className="h-[18px] w-[18px]" stroke="#8f8f8f" strokeWidth="1.500">
            <path d="M0 0L18 18M18 0L0 18" />
          </svg>
        </button>
        <button type="button" aria-label="Collapse" className="flex h-[15px] w-[15px] items-center justify-center rounded-full bg-[#ebebeb]">
          <span className="h-px w-2.5 bg-[#8f8f8f]" />
        </button>
      </div>
    </aside>
  );
}

export default function App() {
  return (
    <div className="flex h-screen overflow-hidden bg-[#bdbdbd] font-['Noto_Sans','Open_Sans',sans-serif] text-[#262e30]">
      <div className="flex min-w-0 flex-1 flex-col">
        <div className="flex min-h-0 flex-1 flex-col bg-[#151515]">
          <TitleBar />
          <NavBar />
          <div className="flex min-h-0 flex-1">
            <aside className="flex w-[498px] shrink-0 flex-col overflow-hidden bg-white text-[17px]">
              <PrinterPanel />
              <FilamentPanel />
              <ProcessPanel />
              <Settings />
            </aside>
            <main className="relative min-w-0 flex-1 bg-[#e6e6e6]">
              <Scene />
              <Toolbar />
              <ObjectInfo />
            </main>
          </div>
        </div>
        <div className="flex h-2 border-t border-[#8f8f8f] bg-[#bfbfbf]">
          <div className="ml-[38%] w-[38%] border-b-2 border-[#8f86b5] bg-[#40366a]" />
        </div>
      </div>
      <div className="flex w-1.5 flex-col">
        <div className="h-12 bg-[#101010]" />
        <div className="h-[94px] bg-[#222224]" />
        <div className="flex-1 border-l border-[#999] bg-[#cfcfcf]" />
      </div>
    </div>
  );
}
